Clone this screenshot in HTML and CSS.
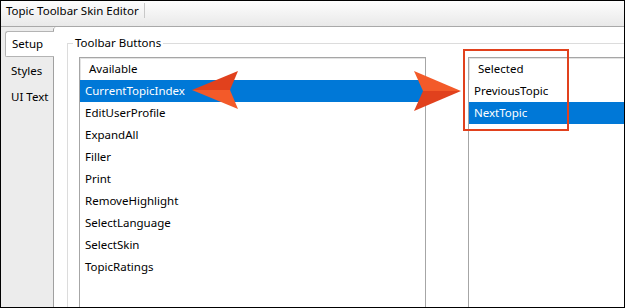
FILE: index.html
```html
<!DOCTYPE html>
<html lang="en">
<head>
    <meta charset="UTF-8">
    <title>Topic Toolbar Skin Editor</title>
    <link rel="stylesheet" href="styles.css">
</head>
<body>

    <div class="window">
        <div class="titlebar">
            <span class="title-text">Topic Toolbar Skin Editor</span>
        </div>

        <div class="main">
            <div class="tabs">
                <div class="tab active">Setup</div>
                <div class="tab">Styles</div>
                <div class="tab">UI Text</div>
            </div>

            <div class="panel">
                <fieldset class="group">
                    <legend>Toolbar Buttons</legend>
                    <div class="lists">
                        <div class="list list-available">
                            <div class="list-header">Available</div>
                            <div class="row selected">CurrentTopicIndex</div>
                            <div class="row">EditUserProfile</div>
                            <div class="row">ExpandAll</div>
                            <div class="row">Filler</div>
                            <div class="row">Print</div>
                            <div class="row">RemoveHighlight</div>
                            <div class="row">SelectLanguage</div>
                            <div class="row">SelectSkin</div>
                            <div class="row">TopicRatings</div>
                        </div>
                        <div class="list list-selected">
                            <div class="list-header">Selected</div>
                            <div class="row">PreviousTopic</div>
                            <div class="row selected">NextTopic</div>
                        </div>
                    </div>
                </fieldset>
            </div>
        </div>
    </div>

    <!-- callout arrows and highlight box drawn over the screenshot -->
    <svg class="callouts" width="625" height="308" viewBox="0 0 625 308">
        <polygon points="192,90 238,71 230,90" fill="#e1411d"/>
        <polygon points="192,90 230,90 238,109" fill="#f35a29"/>
        <polygon points="461,91 414,71 423,91" fill="#f35a29"/>
        <polygon points="461,91 423,91 414,111" fill="#e1411d"/>
        <rect x="464" y="50" width="104" height="80" fill="none" stroke="#e1411d" stroke-width="2"/>
    </svg>

</body>
</html>
```

FILE: styles.css
```css
body {
    margin: 0;
    font-family: 'Noto Sans', 'Open Sans', sans-serif;
    font-size: 11.5px;
    color: #000;
    background-color: #ffffff;
}

.window {
    width: 625px;
    height: 308px;
    box-sizing: border-box;
    border: 1px solid #000;
    display: flex;
    flex-direction: column;
    overflow: hidden;
}

.titlebar {
    height: 25px;
    flex: none;
    display: flex;
    align-items: flex-start;
    border-bottom: 1px solid #a9a9a9;
    background: linear-gradient(#fdfdfd, #e9e9e9);
}

.title-text {
    margin-top: 2px;
    padding: 0 5px;
    line-height: 15px;
    border-right: 1px solid #c8c8c8;
}

.main {
    flex: 1;
    display: flex;
    min-height: 0;
}

.tabs {
    width: 48px;
    flex: none;
    padding: 4px 0 0 4px;
    background-color: #ececec;
}

.tab {
    height: 26px;
    line-height: 26px;
    padding-left: 6px;
    box-sizing: border-box;
}

.tab.active {
    position: relative;
    z-index: 1;
    margin-right: -1px;
    height: 26px;
    line-height: 24px;
    margin-bottom: 1px;
    border: 1px solid #b4b4b4;
    border-right: none;
    border-radius: 3px 0 0 2px;
    background-color: #ffffff;
}

.panel {
    flex: 1;
    min-width: 0;
    border-left: 1px solid #a0a0a0;
    border-top-left-radius: 3px;
    background-color: #ffffff;
    padding: 8px 0 0 13px;
}

.group {
    margin: 0;
    width: 640px;
    height: 400px;
    padding: 6px 0 0 11px;
    border: 1px solid #dcdcdc;
}

.group legend {
    margin-left: -6px;
    padding: 0 2px;
    line-height: 16px;
}

.lists {
    display: flex;
    gap: 42px;
}

.list {
    height: 300px;
    border: 1px solid #a6a6a6;
    background-color: #ffffff;
}

.list-available {
    width: 345px;
}

.list-selected {
    width: 220px;
}

.list-header {
    height: 22px;
    line-height: 22px;
    padding-left: 9px;
    box-shadow: inset 1px 1px 0 #e3e3e3;
}

.row {
    height: 22px;
    line-height: 22px;
    padding-left: 5px;
}

.row.selected {
    background-color: #0078d7;
    color: #ffffff;
}

.callouts {
    position: absolute;
    top: 0;
    left: 0;
    pointer-events: none;
}
```
